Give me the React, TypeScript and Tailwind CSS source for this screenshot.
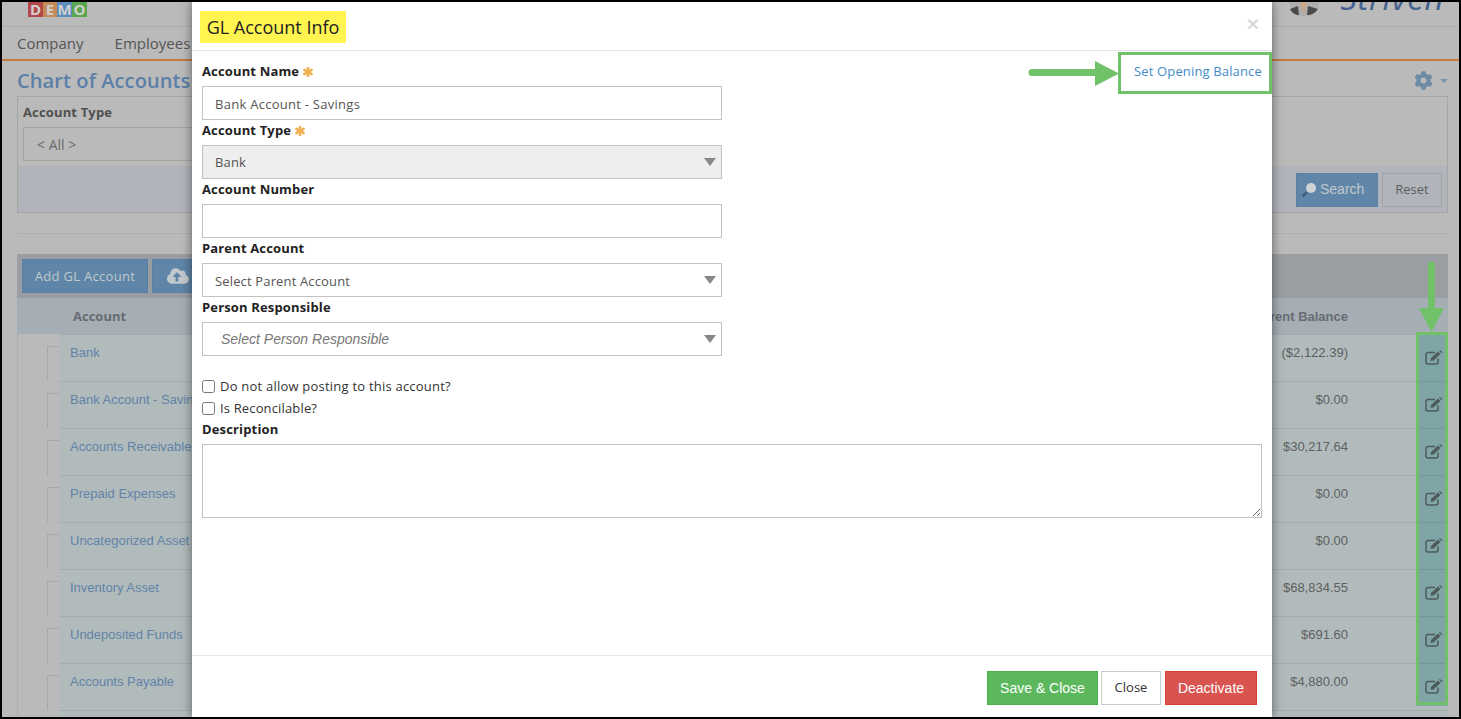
import React from "react";
import { FaAsterisk, FaCloudUploadAlt, FaCog } from "react-icons/fa";

const rows = [
  { name: "Bank", balance: "($2,122.39)" },
  { name: "Bank Account - Savings", balance: "$0.00" },
  { name: "Accounts Receivable", balance: "$30,217.64" },
  { name: "Prepaid Expenses", balance: "$0.00" },
  { name: "Uncategorized Asset", balance: "$0.00" },
  { name: "Inventory Asset", balance: "$68,834.55" },
  { name: "Undeposited Funds", balance: "$691.60" },
  { name: "Accounts Payable", balance: "$4,880.00" },
  { name: "", balance: "" },
];

function EditIcon() {
  return (
    <svg width="18" height="15" viewBox="0 0 18 15" className="ml-[3px]">
      <path
        d="M10 2.5 H3 A2 2 0 0 0 1 4.5 V12 A2 2 0 0 0 3 14 H11 A2 2 0 0 0 13 12 V8.5"
        fill="none"
        stroke="currentColor"
        strokeWidth="1.5"
      />
      <path d="M5.5 10.8 L6 8 L13 1.5 L15.5 4 L8.5 10.5Z" fill="currentColor" />
      <path d="M14 .5 L15 0 L17.5 2.3 L16.5 3.2Z" fill="currentColor" />
    </svg>
  );
}

function Label({ text, required }: { text: string; required?: boolean }) {
  return (
    <div className="flex h-[25px] items-center gap-[4px] pb-[3px] text-[13px] font-bold tracking-[0.15px] text-[#222]">
      <span>{text}</span>
      {required && <FaAsterisk className="h-[10px] w-[10px] text-[#f0ad4e]" stroke="currentColor" strokeWidth={50} />}
    </div>
  );
}

function Select({ text, disabled, italic }: { text: string; disabled?: boolean; italic?: boolean }) {
  return (
    <div
      className={`flex h-[34px] w-[520px] items-center justify-between border border-[#c2c2c2] pr-[5px] ${
        disabled ? "bg-[#eee]" : "bg-white"
      }`}
    >
      <span
        className={
          italic
            ? "pl-[18px] font-['Liberation_Sans',sans-serif] text-[14px] text-[#777] italic"
            : disabled
              ? "pt-[1px] pl-[12px] text-[13px] tracking-[0.15px] text-[#555]"
              : "pt-[3px] pl-[12px] text-[13px] tracking-[0.15px] text-[#555]"
        }
      >
        {text}
      </span>
      <span className="h-0 w-0 border-x-[6px] border-t-[8px] border-x-transparent border-t-[#888]" />
    </div>
  );
}

function Background() {
  return (
    <div className="flex h-full w-full flex-col bg-[#bababa] font-['Open_Sans',sans-serif]">
      {/* top bar with the two cut off logos */}
      <div className="flex h-[25px] shrink-0 items-start justify-between overflow-hidden border-b border-[#adadad] pr-[15px] pl-[26px]">
        <div className="flex h-[15px] w-[59px] text-center text-[15px] leading-[15px] font-bold text-[#d0d0d0]">
          <span className="w-[15px] bg-[#b5474b]">D</span>
          <span className="w-[14px] bg-[#c48a58]">E</span>
          <span className="w-[15px] bg-[#5b8dbd]">M</span>
          <span className="w-[15px] bg-[#5aa84e]">O</span>
        </div>
        <div className="flex items-start gap-[21px]">
          <svg width="30" height="14" viewBox="0 0 30 14">
            <path d="M0 0 H30 Q28 10 22 14 H8 Q2 10 0 0Z" fill="#b0aeac" />
            <path d="M1 7 L9 4 L10 13 Q4 13 1 7Z" fill="#4b4b4b" />
            <path d="M29 7 L19 4 L18 13 Q25 13 29 7Z" fill="#4b4b4b" />
            <path d="M11 0 H18 L15 13Z" fill="#c9a98c" />
          </svg>
          <span className="-mt-[29px] text-[33px] leading-[50px] tracking-[0.6px] text-[#44618f] italic">
            Striven
          </span>
        </div>
      </div>

      {/* nav */}
      <div className="flex h-[34px] shrink-0 items-center gap-[31px] border-b-2 border-[#c47a3f] px-[15px] text-[15px] text-[#555]">
        <span>Company</span>
        <span>Employees</span>
      </div>

      <div className="flex shrink-0 flex-col pr-[11px] pl-[15px]">
        <div className="flex h-[35px] shrink-0 items-center justify-between pt-[4px]">
          <span className="text-[20px] font-semibold tracking-[0.1px] text-[#5a7fa8]">Chart of Accounts</span>
          <span className="flex items-center gap-[7px] text-[#6e8ba5]">
            <FaCog className="h-[19px] w-[19px]" />
            <span className="h-0 w-0 border-x-[4px] border-t-[4px] border-x-transparent border-t-[#7b93a8]" />
          </span>
        </div>

        {/* filter panel */}
        <div className="flex h-[117px] shrink-0 flex-col border border-[#a5a5a5]">
          <div className="flex h-[69px] flex-col px-[5px] pt-[6px]">
            <span className="h-[24px] text-[13px] font-bold tracking-[0.15px] text-[#505050]">Account Type</span>
            <div className="flex h-[34px] w-[180px] items-center border border-[#a3a3a3] pt-[1px] pl-[13px] text-[14px] text-[#6b6b6b]">
              {"< All >"}
            </div>
          </div>
          <div className="flex flex-1 items-center justify-end gap-[4px] bg-[#b1b5bb] pt-[1px] pr-[5px]">
            <div className="flex h-[34px] w-[82px] items-center gap-[3px] border border-[#5a7fa3] bg-[#5f86a8] pl-[4px] font-['Liberation_Sans',sans-serif] text-[14px] text-[#c3c8cc]">
              <svg width="16" height="16" viewBox="0 0 16 16">
                <circle cx="10" cy="6" r="5" fill="#cfd3d6" />
                <path d="M6 10 L1.5 14.5" stroke="#3e5f7f" strokeWidth="2.5" />
              </svg>
              Search
            </div>
            <div className="flex h-[34px] w-[60px] items-center justify-center border border-[#a3a3a3] text-[13px] text-[#5e5e5e]">
              Reset
            </div>
          </div>
        </div>

        <div className="mt-[20px] border-t border-[#b0b0b0]" />

        {/* toolbar */}
        <div className="mt-[20px] flex h-[44px] shrink-0 items-start gap-[4px] bg-[#9a9ea2] pt-[5px] pl-[5px]">
          <div className="flex h-[34px] w-[126px] items-center justify-center border border-[#5a7fa3] bg-[#5f86a8] pt-[1px] text-[13px] tracking-[0.3px] text-[#c3c8cc]">
            Add GL Account
          </div>
          <div className="flex h-[34px] w-[60px] items-center border border-[#5a7fa3] bg-[#5f86a8] pl-[14px] text-[#c3c8cc]">
            <FaCloudUploadAlt className="h-[22px] w-[22px]" />
          </div>
        </div>

        {/* table */}
        <div className="flex h-[36px] shrink-0 items-center justify-between bg-[#a6aeb5] pt-[1px] pr-[100px] pl-[56px] text-[13px] font-bold text-[#666c71]">
          <span>Account</span>
          <span className="font-['Liberation_Sans',sans-serif]">Current Balance</span>
        </div>
        {rows.map((r, i) => (
          <div key={i} className="flex h-[47px] shrink-0">
            <div className="flex w-[42px] shrink-0 justify-end border-l border-[#adadad] pt-[12px]">
              <div className="h-[35px] w-[12px] border-t border-l border-[#a8a8a8]" />
            </div>
            <div className="flex flex-1 justify-between border-t border-[#a4adae] bg-[#b1bbbb] font-['Liberation_Sans',sans-serif] text-[13px] leading-[20px]">
              <span className="pt-[8px] pl-[11px] text-[#6283a8]">{r.name}</span>
              <span className="pt-[8px] pr-[68px] text-[#5f5f5f]">{r.balance}</span>
            </div>
            <div
              className={`flex w-[32px] shrink-0 items-start justify-center pt-[15px] text-[#4f5a5b] ${
                i === 8
                  ? "border-t border-[#a4adae] bg-[#b1bbbb]"
                  : i === 7
                    ? "border-t border-[#72979a] bg-[linear-gradient(#7fa5a7_42px,#b1bbbb_42px)]"
                    : "border-t border-[#72979a] bg-[#7fa5a7]"
              }`}
            >
              {r.name && <EditIcon />}
            </div>
          </div>
        ))}
      </div>
    </div>
  );
}

function Modal() {
  return (
    <div className="absolute top-0 bottom-0 left-[190px] flex w-[1080px] flex-col bg-white font-['Open_Sans',sans-serif] shadow-[0_0_10px_rgba(0,0,0,0.5)]">
      <div className="flex h-[49px] shrink-0 items-start justify-between border-b border-[#e5e5e5] pt-[9px] pr-[13px] pl-[8px]">
        <h4 className="flex h-[32px] w-[146px] items-center justify-center bg-[#fff450] text-[18px] text-[#222]">
          GL Account Info
        </h4>
        <span className="mt-[2px] font-['Liberation_Sans',sans-serif] text-[21px] leading-[21px] font-bold text-[#d8d8d8]">
          ×
        </span>
      </div>

      <div className="flex flex-1 justify-between px-[10px] pt-[10px]">
        <div className="flex w-full flex-col">
          <Label text="Account Name" required />
          <div className="flex h-[34px] w-[520px] items-center border border-[#c2c2c2] pt-[3px] pl-[12px] text-[13px] tracking-[0.27px] text-[#555]">
            Bank Account - Savings
          </div>
          <Label text="Account Type" required />
          <Select text="Bank" disabled />
          <Label text="Account Number" />
          <div className="h-[34px] w-[520px] border border-[#c2c2c2]" />
          <Label text="Parent Account" />
          <Select text="Select Parent Account" />
          <Label text="Person Responsible" />
          <Select text="Select Person Responsible" italic />

          <label className="mt-[19px] flex h-[22px] items-center gap-[5px] text-[13px] tracking-[0.22px] text-[#333]">
            <input type="checkbox" className="h-[13px] w-[13px]" />
            <span className="pt-[2px]">Do not allow posting to this account?</span>
          </label>
          <label className="flex h-[22px] items-center gap-[5px] text-[13px] tracking-[0.15px] text-[#333]">
            <input type="checkbox" className="h-[13px] w-[13px]" />
            <span className="pt-[2px]">Is Reconcilable?</span>
          </label>
          <Label text="Description" />
          <textarea className="h-[74px] w-[1060px] border border-[#c2c2c2]" readOnly />
        </div>
      </div>

      <div className="flex h-[62px] shrink-0 items-start justify-end gap-[3px] border-t border-[#e5e5e5] pt-[15px] pr-[15px] font-['Liberation_Sans',sans-serif] text-[14px]">
        <button className="h-[34px] w-[111px] border border-[#4cae4c] bg-[#5cb85c] text-white">Save &amp; Close</button>
        <button className="h-[34px] w-[60px] border border-[#ccc] bg-white font-['Open_Sans',sans-serif] text-[13px] text-[#333]">
          Close
        </button>
        <button className="ml-[1px] h-[34px] w-[92px] border border-[#d43f3a] bg-[#d9534f] text-white">Deactivate</button>
      </div>

      <a className="absolute top-[50px] right-0 flex h-[42px] w-[154px] items-center border-[3px] border-[#70c168] pb-[2px] pl-[13px] text-[13px] tracking-[0.15px] text-[#428bca]">
        Set Opening Balance
      </a>
      <svg className="absolute top-[59px] left-[836px]" width="91" height="25" viewBox="0 0 91 25">
        <path d="M4 11.5 H68" stroke="#70c168" strokeWidth="7" strokeLinecap="round" />
        <path d="M67 0 L91 12.5 L67 25Z" fill="#70c168" />
      </svg>
    </div>
  );
}

export default function App() {
  return (
    <div className="relative h-[719px] w-[1461px] overflow-hidden border-2 border-black">
      <Background />
      <Modal />
      {/* annotation over the edit column */}
      <div className="absolute top-[330px] left-[1414px] h-[373px] w-[32px] border-[3px] border-[#70c168]" />
      <svg className="absolute top-[259px] left-[1417px]" width="25" height="71" viewBox="0 0 25 71">
        <path d="M12.5 4 V48" stroke="#70c168" strokeWidth="7" strokeLinecap="round" />
        <path d="M0 47 L12.5 71 L25 47Z" fill="#70c168" />
      </svg>
    </div>
  );
}
